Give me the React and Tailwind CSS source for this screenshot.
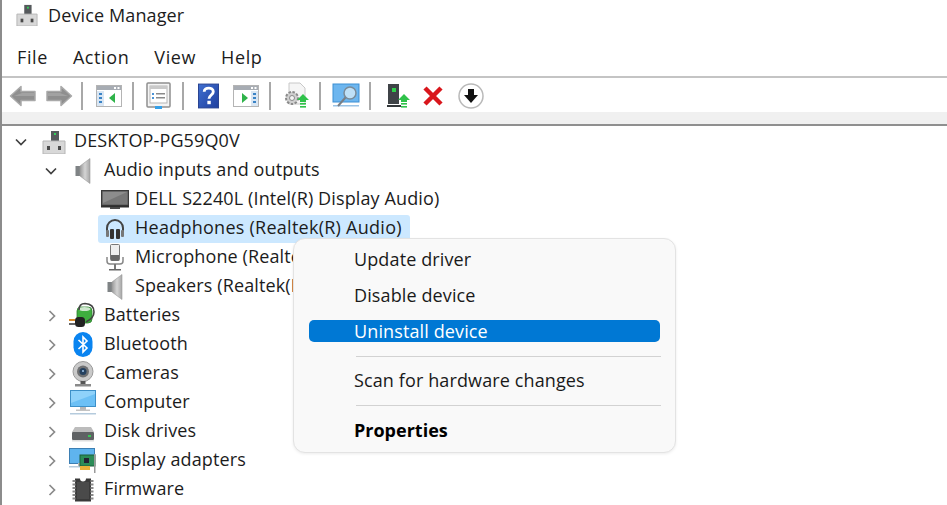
import React from "react";

const Sep = () => <div className="w-[2px] h-[28px] bg-[#a8a8a8] shrink-0" />;

const Arrow = ({ flip }) => (
  <svg width="28" height="24" viewBox="0 0 28 24" className={flip ? "-scale-x-100" : ""}>
    <path d="M1.5 12 L12 2.5 V7.5 H26 V16.5 H12 V21.5 Z" fill="#8f8f8f" stroke="#a9a9a9" strokeWidth="1.5" strokeLinejoin="round" />
    <path d="M13 9 H25 V12 H5 Z" fill="#a2a2a2" />
  </svg>
);

const Pane = ({ side }) => (
  <svg width="26" height="22" viewBox="0 0 26 22">
    <rect x="0.5" y="0.5" width="25" height="21" fill="#fff" stroke="#b4b4b4" />
    <rect x="1" y="1" width="24" height="4" fill="#a7acb3" />
    <rect x="18" y="2" width="2" height="2" fill="#fff" />
    <rect x="21.5" y="2" width="2" height="2" fill="#fff" />
    {side === "left" ? (
      <>
        <rect x="1" y="6" width="7" height="15" fill="#d9e6f3" />
        <rect x="3" y="8" width="3" height="2" fill="#3a83c6" />
        <rect x="3" y="12" width="3" height="2" fill="#3a83c6" />
        <rect x="3" y="16" width="3" height="2" fill="#3a83c6" />
        <path d="M19 8 V18 L13 13 Z" fill="#2fb34a" />
      </>
    ) : (
      <>
        <rect x="18" y="6" width="7" height="15" fill="#d9e6f3" />
        <rect x="20" y="8" width="3" height="2" fill="#3a83c6" />
        <rect x="20" y="12" width="3" height="2" fill="#3a83c6" />
        <rect x="20" y="16" width="3" height="2" fill="#3a83c6" />
        <path d="M9 8 V18 L15 13 Z" fill="#2fb34a" />
      </>
    )}
  </svg>
);

const PropsIcon = () => (
  <svg width="25" height="28" viewBox="0 0 25 28">
    <rect x="1" y="1" width="23" height="24" rx="1" fill="#f4f4f4" stroke="#8f8f8f" strokeWidth="1.5" />
    <rect x="4" y="4" width="17" height="17" fill="#fff" stroke="#b5b5b5" />
    <rect x="4" y="4" width="17" height="3" fill="#c9c9c9" />
    <rect x="6" y="11" width="2" height="2" fill="#4b93d6" />
    <rect x="6" y="15" width="2" height="2" fill="#4b93d6" />
    <rect x="10" y="11" width="9" height="1.5" fill="#8a8a8a" />
    <rect x="10" y="15" width="9" height="1.5" fill="#8a8a8a" />
    <rect x="9" y="24" width="7" height="3" fill="#36a0e8" />
  </svg>
);

const HelpIcon = () => (
  <svg width="21" height="26" viewBox="0 0 22 26">
    <defs>
      <linearGradient id="hg" x1="0" y1="0" x2="1" y2="1">
        <stop offset="0" stopColor="#3f6fd0" />
        <stop offset="1" stopColor="#1f3f9e" />
      </linearGradient>
    </defs>
    <rect x="0.5" y="0.5" width="21" height="25" fill="url(#hg)" stroke="#26408f" />
    <path d="M6.5 8.5 C6.5 3.5 16 3.5 16 8.5 C16 12 11.5 12 11.5 16" fill="none" stroke="#fff" strokeWidth="3" />
    <rect x="9.8" y="18" width="3.6" height="3.6" fill="#fff" />
  </svg>
);

const UpGreen = ({ x, y }) => (
  <g transform={`translate(${x} ${y})`}>
    <path d="M0 6 L6 0 L12 6 H9 V8 H3 V6 Z" fill="#2fc24a" />
    <rect x="3" y="9" width="6" height="1.6" fill="#2fc24a" />
    <rect x="3" y="12" width="6" height="1.6" fill="#2fc24a" />
  </g>
);

const ScanUpdate = () => (
  <svg width="27" height="28" viewBox="0 0 27 28">
    <path d="M6 1 H17 L22 6 V22 H6 Z" fill="#f5f5f5" stroke="#c8c8c8" />
    <circle cx="9" cy="16" r="6" fill="#cfcfcf" stroke="#8a8a8a" strokeWidth="2" strokeDasharray="2.5 1.5" />
    <circle cx="9" cy="16" r="2.5" fill="#f5f5f5" stroke="#8a8a8a" />
    <UpGreen x="14" y="12" />
  </svg>
);

const ScanMonitor = () => (
  <svg width="28" height="26" viewBox="0 0 28 26">
    <rect x="1" y="1" width="26" height="18" fill="#6db6ef" stroke="#3d8fd4" />
    <rect x="1" y="22" width="26" height="1.5" fill="#9cc4e6" />
    <circle cx="18" cy="10" r="6" fill="#bfe0f7" stroke="#7a8b99" strokeWidth="1.5" />
    <path d="M13.5 14.5 L6 23" stroke="#7a7f85" strokeWidth="2" />
  </svg>
);

const Tower = () => (
  <svg width="24" height="26" viewBox="0 0 24 26">
    <path d="M1 1 H12 V21 H1 Z" fill="#3f4347" />
    <rect x="5" y="5" width="4" height="4" fill="#2fd14b" />
    <rect x="0" y="22" width="14" height="2" fill="#33373a" />
    <UpGreen x="11" y="11" />
  </svg>
);

const XIcon = () => (
  <svg width="22" height="22" viewBox="0 0 22 22">
    <path d="M3 3 L19 19 M19 3 L3 19" stroke="#d9161c" strokeWidth="4.5" />
  </svg>
);

const DownCircle = () => (
  <svg width="26" height="26" viewBox="0 0 26 26">
    <circle cx="13" cy="13" r="12" fill="#fff" stroke="#b9b9b9" strokeWidth="1.5" />
    <path d="M10 6 H16 V12 H20 L13 20 L6 12 H10 Z" fill="#111" />
  </svg>
);

const DevMgr = ({ size = 24 }) => (
  <svg width={size} height={size} viewBox="0 0 24 24">
    <rect x="9" y="1" width="8" height="12" fill="#55595c" />
    <rect x="12" y="3" width="2" height="2" fill="#32d25a" />
    <path d="M1 11 H23 V24 H1 Z" fill="#d8d8d8" stroke="#b5b5b5" />
    <rect x="5" y="16" width="3" height="4" fill="#4a4a4a" />
    <rect x="16" y="16" width="3" height="4" fill="#4a4a4a" />
  </svg>
);

const Speaker = () => (
  <svg width="16" height="26" viewBox="0 0 16 26">
    <defs>
      <linearGradient id="sp" x1="0" y1="0" x2="1" y2="0">
        <stop offset="0" stopColor="#9a9a9a" />
        <stop offset="0.5" stopColor="#d4d4d4" />
        <stop offset="1" stopColor="#a6a6a6" />
      </linearGradient>
    </defs>
    <rect x="0.5" y="8" width="5" height="10" fill="#7f8385" />
    <path d="M5 8 L15 0.5 V25.5 L5 18 Z" fill="url(#sp)" stroke="#9a9a9a" strokeWidth="0.6" />
  </svg>
);

const Monitor = () => (
  <svg width="28" height="19" viewBox="0 0 28 19">
    <rect x="0.5" y="0.5" width="27" height="15" fill="#777" stroke="#3a3a3a" strokeWidth="1.5" />
    <path d="M2 2 H26 L2 13 Z" fill="#8d8d8d" />
    <rect x="0" y="15.5" width="28" height="2" fill="#2e2e2e" />
    <rect x="9" y="17" width="10" height="2" fill="#4a4a4a" />
  </svg>
);

const Headphones = () => (
  <svg width="20" height="22" viewBox="0 0 20 22">
    <path d="M2 14 V10 A8 8 0 0 1 18 10 V14" fill="none" stroke="#444" strokeWidth="2" />
    <rect x="1" y="12" width="3" height="7" rx="1" fill="#777" />
    <rect x="5" y="11" width="4" height="10" rx="1" fill="#333" />
    <rect x="11" y="11" width="4" height="10" rx="1" fill="#333" />
    <rect x="16" y="12" width="3" height="7" rx="1" fill="#777" />
  </svg>
);

const Mic = () => (
  <svg width="18" height="27" viewBox="0 0 18 27">
    <rect x="4.5" y="0.5" width="9" height="16" rx="1" fill="#eee" stroke="#777" />
    <rect x="5" y="11" width="8" height="5.5" fill="#666" />
    <path d="M1 13 V17 Q1 20 4 20 H14 Q17 20 17 17 V13" fill="none" stroke="#888" strokeWidth="1.5" />
    <rect x="8" y="20" width="2" height="5" fill="#777" />
    <rect x="3" y="25" width="12" height="1.5" fill="#666" />
  </svg>
);

const Battery = () => (
  <svg width="27" height="27" viewBox="0 0 27 27">
    <rect x="8" y="5" width="15" height="16" rx="4" fill="#3fae3f" stroke="#2f7f2f" strokeWidth="0.8" />
    <ellipse cx="15.5" cy="7" rx="6" ry="2" fill="#cfe8cf" />
    <path d="M10 8 Q10 1.5 16 1.5 Q25 2 25 10 Q25 16 17 20" fill="none" stroke="#444" strokeWidth="1.6" />
    <rect x="6" y="15" width="10" height="10" rx="3.5" fill="#222" />
    <rect x="0" y="17" width="6" height="2" fill="#d98a2b" />
    <rect x="0" y="21" width="6" height="2" fill="#666" />
  </svg>
);

const Bluetooth = () => (
  <svg width="20" height="25" viewBox="0 0 20 25">
    <rect x="0.5" y="0" width="19" height="25" rx="9.5" fill="#0a84f0" />
    <path d="M5.5 8 L14 16 L10 20 V5 L14 9 L5.5 17" fill="none" stroke="#fff" strokeWidth="1.6" />
  </svg>
);

const Camera = () => (
  <svg width="22" height="26" viewBox="0 0 22 26">
    <circle cx="11" cy="10.5" r="10" fill="#c9c9c9" stroke="#9a9a9a" />
    <circle cx="11" cy="10.5" r="6" fill="#6f7072" />
    <circle cx="11" cy="10.5" r="3.5" fill="#24405f" />
    <circle cx="11" cy="10" r="1" fill="#9ec5ea" />
    <rect x="8.5" y="20" width="5" height="3" fill="#555" />
    <rect x="3" y="23" width="16" height="2.5" fill="#8a8a8a" />
  </svg>
);

const Computer = () => (
  <svg width="26" height="25" viewBox="0 0 26 25">
    <rect x="0.5" y="0.5" width="25" height="16" fill="#6cc0f5" stroke="#3d90c8" />
    <path d="M1 1 H25 V4 L1 13 Z" fill="#8fd2fa" />
    <rect x="10" y="17" width="6" height="3" fill="#b7b7b7" />
    <rect x="6" y="19.5" width="14" height="1.5" fill="#c3c3c3" />
    <rect x="0" y="23" width="26" height="1.5" fill="#b5cbdd" />
  </svg>
);

const Disk = () => (
  <svg width="24" height="20" viewBox="0 0 24 20">
    <path d="M4 5 H20 L23 10 H1 Z" fill="#bcbcbc" />
    <rect x="1" y="10" width="22" height="8" rx="1" fill="#5f6264" />
    <rect x="17" y="13" width="3" height="2" fill="#39c956" />
    <rect x="1" y="18" width="22" height="1.5" fill="#dedede" />
  </svg>
);

const Adapter = () => (
  <svg width="27" height="25" viewBox="0 0 27 25">
    <rect x="0.5" y="0.5" width="25" height="15" fill="#5fb4ee" stroke="#3d7fb3" />
    <rect x="9" y="15" width="8" height="3" fill="#b7b7b7" />
    <rect x="0" y="18" width="14" height="1.5" fill="#b5cbdd" />
    <rect x="11" y="7" width="15" height="11" fill="#2b8c58" stroke="#1b5e3b" />
    <rect x="15" y="10" width="5" height="5" fill="#223" />
    <rect x="11" y="18" width="10" height="4" fill="#e8b23a" />
    <rect x="25" y="6" width="1.5" height="19" fill="#9a9a9a" />
  </svg>
);

const Chip = () => (
  <svg width="22" height="24" viewBox="0 0 22 24">
    <path d="M3 0.5 H8 A3 3 0 0 0 14 0.5 H19 V23.5 H3 Z" fill="#3a3a3a" />
    {[2, 5.5, 9, 12.5, 16, 19.5].map((y) => (
      <g key={y}>
        <rect x="0.5" y={y} width="3" height="2" fill="#8a8a8a" />
        <rect x="18.5" y={y} width="3" height="2" fill="#8a8a8a" />
      </g>
    ))}
    <rect x="5" y="4" width="12" height="17" fill="#4a4a4a" />
  </svg>
);

const Chevron = ({ open }) => (
  <svg width="12" height="12" viewBox="0 0 12 12">
    {open ? (
      <path d="M1 3.5 L6 8.5 L11 3.5" fill="none" stroke="#404040" strokeWidth="1.7" />
    ) : (
      <path d="M3.5 1 L8.5 6 L3.5 11" fill="none" stroke="#8a8a8a" strokeWidth="1.7" />
    )}
  </svg>
);

const Row = ({ indent, chevron, chevronGap = "mr-[15px]", icon, iconBox, label, selected }) => (
  <div className={`h-[29px] flex items-center ${indent}`}>
    {chevron ? (
      <div className={`w-[12px] flex items-center justify-center shrink-0 ${chevronGap}`}>
        <Chevron open={chevron === "open"} />
      </div>
    ) : null}
    <div className={`flex items-center ${selected ? "bg-[#cce8ff] rounded-[3px] h-[28px] pl-[3px] pr-[8px] -ml-[3px] tracking-[0.26px]" : "h-[29px]"}`}>
      <div className={`${iconBox} flex items-center justify-center shrink-0`}>{icon}</div>
      <span className="whitespace-nowrap pb-[2px]">{label}</span>
    </div>
  </div>
);

const MenuItem = ({ children, bold, active }) => (
  <div
    className={`h-[22px] rounded-[5px] flex items-center pl-[45px] ${
      bold ? "font-bold text-black tracking-[0px]" : ""
    } ${active ? "bg-[#0078d4] text-white" : "text-[#1a1a1a]"}`}
  >
    {children}
  </div>
);

const Leaf = (props) => <Row indent="pl-[99px]" iconBox="w-[28px] mr-[6px]" {...props} />;
const Closed = (props) => (
  <Row indent="pl-[44px]" chevron="closed" chevronGap="mr-[11px]" iconBox="w-[27px] mr-[8px]" {...props} />
);

export default function App() {
  return (
    <div className="relative w-[947px] h-[505px] overflow-hidden bg-white border-l-2 border-[#8c8c8c] text-[18px] text-[#1c1c1c] font-['Open_Sans','Noto_Sans',sans-serif] tracking-[0.12px]">
      <div className="h-[38px] flex items-center pl-[14px] gap-[10px] pb-[8px]">
        <DevMgr size={22} />
        <span>Device Manager</span>
      </div>
      <div className="h-[38px] flex items-center pl-[15px] gap-[25px] tracking-[0.6px]">
        <span>File</span>
        <span>Action</span>
        <span>View</span>
        <span>Help</span>
      </div>
      <div className="h-[2px] bg-[#c4c4c4]" />
      <div className="h-[34px] flex items-center pl-[7px] pt-[2px]">
        <div className="flex items-center gap-[8px]">
          <Arrow />
          <Arrow flip />
        </div>
        <div className="ml-[8px] mr-[13px]"><Sep /></div>
        <Pane side="left" />
        <div className="ml-[10px] mr-[12px]"><Sep /></div>
        <PropsIcon />
        <div className="ml-[11px] mr-[14px]"><Sep /></div>
        <HelpIcon />
        <div className="ml-[14px]"><Pane side="right" /></div>
        <div className="ml-[10px] mr-[12px]"><Sep /></div>
        <ScanUpdate />
        <div className="ml-[9px] mr-[11px]"><Sep /></div>
        <ScanMonitor />
        <div className="ml-[9px] mr-[16px]"><Sep /></div>
        <Tower />
        <div className="ml-[11px]"><XIcon /></div>
        <div className="ml-[14px]"><DownCircle /></div>
      </div>
      <div className="h-[12px] bg-[#f0f0f0]" />
      <div className="h-[2px] bg-[#8f8f8f]" />
      <div className="pt-[1px]">
        <Row indent="pl-[13px]" chevron="open" icon={<DevMgr />} iconBox="w-[24px] mr-[8px]" label="DESKTOP-PG59Q0V" />
        <Row indent="pl-[43px]" chevron="open" chevronGap="mr-[13px]" icon={<Speaker />} iconBox="w-[26px] mr-[8px]" label="Audio inputs and outputs" />
        <Leaf icon={<Monitor />} label="DELL S2240L (Intel(R) Display Audio)" />
        <Leaf selected icon={<Headphones />} label="Headphones (Realtek(R) Audio)" />
        <Leaf icon={<Mic />} label="Microphone (Realtek(R) Audio)" />
        <Leaf icon={<Speaker />} label="Speakers (Realtek(R) Audio)" />
        <Closed icon={<Battery />} label="Batteries" />
        <Closed icon={<Bluetooth />} label="Bluetooth" />
        <Closed icon={<Camera />} label="Cameras" />
        <Closed icon={<Computer />} label="Computer" />
        <Closed icon={<Disk />} label="Disk drives" />
        <Closed icon={<Adapter />} label="Display adapters" />
        <Closed icon={<Chip />} label="Firmware" />
      </div>
      <div className="absolute left-[291px] top-[238px] w-[383px] h-[215px] bg-[#f9f9f9] border border-[#e3e3e3] rounded-[12px] shadow-[0_1px_3px_rgba(0,0,0,0.08)] px-[15px] pt-[9px]">
        <div className="flex flex-col gap-[14px]">
          <MenuItem>Update driver</MenuItem>
          <MenuItem>Disable device</MenuItem>
          <MenuItem active>Uninstall device</MenuItem>
        </div>
        <div className="h-[1px] bg-[#d2d2d2] ml-[47px] -mr-[1px] mt-[14px]" />
        <div className="mt-[12px]"><MenuItem>Scan for hardware changes</MenuItem></div>
        <div className="h-[1px] bg-[#d2d2d2] ml-[47px] -mr-[1px] mt-[14px]" />
        <div className="mt-[13px]"><MenuItem bold>Properties</MenuItem></div>
      </div>
    </div>
  );
}
